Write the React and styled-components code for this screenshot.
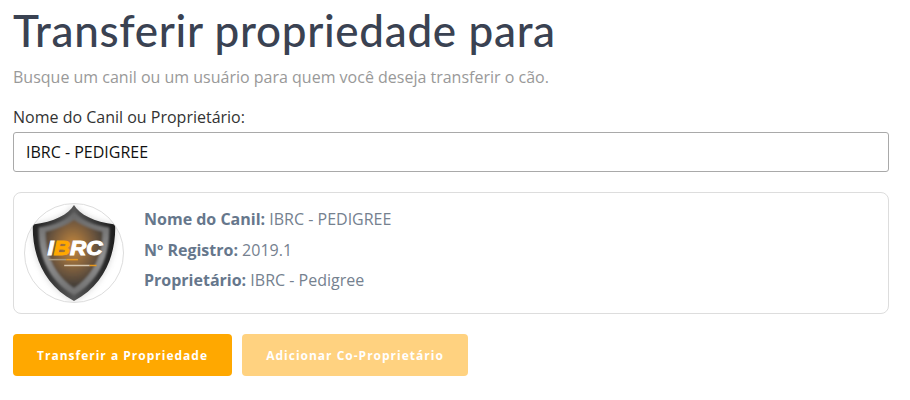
import styled, { createGlobalStyle } from 'styled-components'

const GlobalStyle = createGlobalStyle`
    html, body {
        margin: 0;
        padding: 0;
        background-color: #FFFFFF;
    }
    * {
        box-sizing: border-box;
    }
`

const Page = styled.div`
    width: 910px;
    height: 400px;
    padding: 6px 21px 0 13px;
    font-family: "Open Sans", sans-serif;
    overflow: hidden;
`

const Title = styled.h1`
    margin: 0;
    font-family: Lato, sans-serif;
    font-size: 44px;
    line-height: 48px;
    font-weight: 500;
    letter-spacing: 0.68px;
    color: #3A4252;
`

const Subtitle = styled.p`
    margin: 12px 0 0;
    font-size: 16px;
    line-height: 22px;
    color: #999999;
`

const Label = styled.label`
    display: block;
    margin-top: 18px;
    font-size: 16px;
    line-height: 22px;
    color: #333333;
`

const Input = styled.input`
    display: block;
    width: 100%;
    height: 40px;
    margin-top: 4px;
    padding: 0 12px;
    font-family: inherit;
    font-size: 16px;
    color: #111111;
    background-color: #FFFFFF;
    border: 1px solid #A9A9A9;
    border-radius: 3px;
    outline: none;
`

const Card = styled.div`
    display: flex;
    align-items: center;
    gap: 20px;
    height: 122px;
    margin-top: 20px;
    padding: 0 10px;
    border: 1px solid #DDDDDD;
    border-radius: 8px;
`

const Avatar = styled.div`
    display: flex;
    flex: none;
    width: 100px;
    height: 100px;
    border: 1px solid #DDDDDD;
    border-radius: 50%;
    overflow: hidden;
`

const Info = styled.div`
    display: flex;
    flex-direction: column;
    gap: 8.5px;
    padding-bottom: 7px;
`

const InfoRow = styled.div`
    font-size: 16px;
    line-height: 22px;
    color: #75818F;
`

const InfoLabel = styled.strong`
    font-weight: 700;
    color: #66778C;
`

const Actions = styled.div`
    display: flex;
    gap: 10px;
    margin-top: 20px;
`

const Button = styled.button`
    height: 42px;
    width: ${({ width }) => width}px;
    padding: 0;
    font-family: inherit;
    font-size: 12px;
    font-weight: 700;
    letter-spacing: 1px;
    color: #FFFFFF;
    background-color: ${({ disabled }) => disabled ? "#FFD280" : "#FFA800"};
    border: none;
    border-radius: 4px;
`

function ShieldLogo() {
    const shield = "M50 1 C56 11 70 18 92 21 C93 50 82 82 50 99 C18 82 7 50 8 21 C30 18 44 11 50 1 Z"
    const band = "M50 8 C57 16 70 22 86 24 C87 50 77 78 50 93 C23 78 13 50 14 24 C30 22 43 16 50 8 Z"
    const inner = "M50 16 C58 22 70 26 79 28 C80 50 71 72 50 86 C29 72 20 50 21 28 C30 26 42 22 50 16 Z"
    return (
        <svg width="98" height="98" viewBox="0 0 100 100">
            <defs>
                <linearGradient id="rim" x1="0" x2="1" y1="0" y2="0">
                    <stop offset="0" stopColor="#222222" />
                    <stop offset="0.5" stopColor="#555555" />
                    <stop offset="1" stopColor="#1C1C1C" />
                </linearGradient>
                <linearGradient id="band" x1="0" x2="0" y1="0" y2="1">
                    <stop offset="0" stopColor="#666666" />
                    <stop offset="0.55" stopColor="#919191" />
                    <stop offset="1" stopColor="#707070" />
                </linearGradient>
                <radialGradient id="glow" cx="0.48" cy="0.4" r="0.62">
                    <stop offset="0" stopColor="#C98A3C" />
                    <stop offset="0.5" stopColor="#80603E" />
                    <stop offset="1" stopColor="#383838" />
                </radialGradient>
                <filter id="soft" x="-5%" y="-5%" width="110%" height="110%">
                    <feGaussianBlur stdDeviation="1.1" />
                </filter>
                <filter id="halo" x="-15%" y="-15%" width="130%" height="130%">
                    <feGaussianBlur stdDeviation="3" />
                </filter>
            </defs>
            <path d={shield} fill="#999999" opacity="0.45" filter="url(#halo)" />
            <path d={shield} fill="url(#rim)" />
            <g filter="url(#soft)">
                <path d={band} fill="url(#band)" />
                <path d={inner} fill="url(#glow)" />
            </g>
            <text x="23" y="52" textLength="56" lengthAdjust="spacingAndGlyphs" fontFamily="Liberation Sans, sans-serif" fontStyle="italic" fontWeight="700" fontSize="20" fill="#FFFFFF" stroke="#FFFFFF" strokeWidth="1">I<tspan fill="#FFA800" stroke="#FFA800">B</tspan>RC</text>
            <rect x="24" y="56" width="18" height="1.5" fill="#A89880" />
            <rect x="42" y="56" width="12" height="1.5" fill="#E89A20" />
            <rect x="40" y="62" width="26" height="1.5" fill="#D8C8B0" />
            <rect x="66" y="62" width="7" height="1.5" fill="#E89A20" />
        </svg>
    )
}

export default function App() {
    return (
        <Page>
            <GlobalStyle />
            <Title>Transferir propriedade para</Title>
            <Subtitle>Busque um canil ou um usuário para quem você deseja transferir o cão.</Subtitle>
            <Label htmlFor="owner">Nome do Canil ou Proprietário:</Label>
            <Input id="owner" defaultValue="IBRC - PEDIGREE" />
            <Card>
                <Avatar><ShieldLogo /></Avatar>
                <Info>
                    <InfoRow><InfoLabel>Nome do Canil:</InfoLabel> IBRC - PEDIGREE</InfoRow>
                    <InfoRow><InfoLabel>Nº Registro:</InfoLabel> 2019.1</InfoRow>
                    <InfoRow><InfoLabel>Proprietário:</InfoLabel> IBRC - Pedigree</InfoRow>
                </Info>
            </Card>
            <Actions>
                <Button width={219}>Transferir a Propriedade</Button>
                <Button width={226} disabled>Adicionar Co-Proprietário</Button>
            </Actions>
        </Page>
    )
}
